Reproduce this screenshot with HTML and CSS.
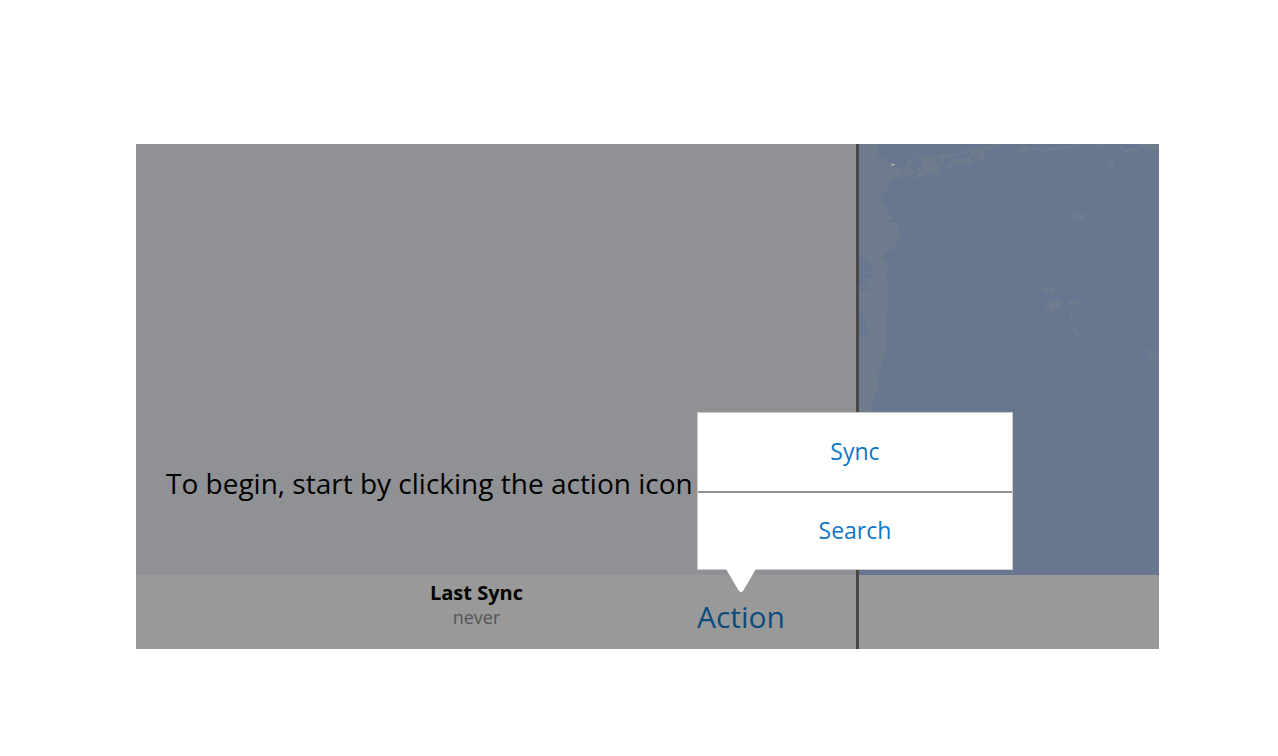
FILE: index.html
```html
<!DOCTYPE html>
<html lang="en">
<head>
<meta charset="utf-8">
<title>Sync</title>
<link rel="stylesheet" href="styles.css">
</head>
<body>
<main class="app">
  <section class="panel">
    <div class="panel-body">
      <p class="hint">To begin, start by clicking the action icon</p>
    </div>
    <footer class="toolbar">
      <div class="status">
        <strong class="status-title">Last Sync</strong>
        <span class="status-value">never</span>
      </div>
      <div class="action">
        <button class="action-button" type="button" aria-haspopup="menu" aria-expanded="true">Action</button>
        <div class="popover" role="menu">
          <button class="popover-item" type="button" role="menuitem">Sync</button>
          <button class="popover-item" type="button" role="menuitem">Search</button>
          <svg class="popover-arrow" viewBox="0 0 30 24" aria-hidden="true"><path d="M0 0H30L17 22Q15 24 13 22Z" fill="#fff"/></svg>
        </div>
      </div>
    </footer>
  </section>
  <section class="map-pane">
    <svg class="map" viewBox="0 0 300 430" preserveAspectRatio="xMinYMin slice" aria-hidden="true">
      <rect width="300" height="430" fill="#68768f"/>
      <g fill="#6e7c8d">
        <path d="M0 0H17L19 4L18 8L21 13L26 15L28 18L33 19L35 22L42 24L48 21L49 17L54 13L61 11L76 12L82 10L91 9L100 9L108 5L121 4L127 1L146 0L145 2L136 3L132 6L127 5L125 9L127 14L122 16L118 14L114 20L109 22L105 19L96 21L92 24L87 26L84 23L77 22L83 27L79 31L70 29L64 33L58 35L55 33L60 28L56 27L52 32L45 31L41 34L35 34L30 38L28 43L32 48L29 50L27 45L23 49L21 54L24 60L27 63L31 70L34 75L27 77L38 78L39 86L42 90L38 96L36 103L40 107L46 108L46 110L37 107L33 104L28 107L23 114L29 120L29 127L27 132L31 139L28 144L30 151L29 162L27 170L27 181L28 193L27 205L23 217L20 228L18 239L20 242L17 248L15 256L12 266L0 270Z"/>
        <path d="M157 7L163 1L171 4L178 3L185 6L193 3L209 2L223 0L219 3L200 5L187 8L176 6L165 8L159 10Z"/>
        <path d="M232 5L238 1L245 0L241 3L233 7ZM253 1L263 3L268 5L278 3L281 0H300V6L290 6L281 4L278 6L269 8L269 11L265 9L262 5Z"/>
        <path d="M201 15L207 11L210 13L205 15L203 17ZM250 20L253 17L255 25L252 28L249 24ZM201 36L204 39L201 43L200 41Z"/>
        <path d="M216 68L219 70L222 67L221 72L225 69L228 67L223 76L217 73L214 78Z"/>
        <path d="M181 145L187 143L191 145L194 142L196 149L193 152L190 147L186 149ZM186 160L191 156L203 156L202 161L195 164L193 168L186 163ZM206 160L212 156H224L220 161ZM210 165L214 167L213 175L210 180L207 179L212 174ZM212 182L216 182L218 187L220 191L215 189Z"/>
        <path d="M148 220L152 222L159 230L155 228ZM287 206L292 205L295 216L291 214ZM295 207L300 213V216L296 213ZM297 218L300 220V225Z"/>
      </g>
      <g fill="#68768f">
        <path d="M0 111L5 114L15 123L10 127L15 134L4 135L11 139L0 141ZM0 143L12 144L9 146L2 147ZM0 164L4 169L6 176L10 189L0 193Z"/>
        <path d="M51 18L56 14L63 13V26L60 24L55 26L50 24L54 20ZM75 15L82 14L79 18L84 21L78 20ZM86 14L105 10L113 8L107 15L98 14L90 19L87 25L84 20ZM112 13L116 9L120 10L116 14L112 18ZM40 27L47 26L44 29Z"/>
      </g>
      <path d="M32 20H36V21H34V22H33Z" fill="#c8b6aa"/>
    </svg>
    <div class="map-footer"></div>
  </section>
</main>
</body>
</html>
```
FILE: styles.css
```css
* {
  box-sizing: border-box;
}

body {
  margin: 0;
  min-height: 100vh;
  padding: 144px 119px 107px 136px;
  display: flex;
  background: #fff;
  color: #000;
  font-family: "Segoe UI", "Open Sans", "Noto Sans", sans-serif;
}

button {
  margin: 0;
  padding: 0;
  border: 0;
  background: none;
  font: inherit;
  cursor: pointer;
}

.app {
  flex: 1;
  display: grid;
  grid-template-columns: 720fr 303fr;
}

.panel,
.map-pane {
  display: grid;
  grid-template-rows: 1fr 74px;
  min-width: 0;
}

.panel-body {
  display: flex;
  align-items: flex-end;
  padding: 0 28px 72px 30px;
  background: #909195;
}

.hint {
  margin: 0;
  font-size: 28px;
  line-height: 40px;
  white-space: nowrap;
}

.toolbar {
  display: grid;
  grid-template-columns: 1fr auto;
  padding: 6px 71px 12px 120px;
  background: #999;
}

.status {
  display: flex;
  flex-direction: column;
  align-items: center;
}

.status-title {
  font-size: 20px;
  line-height: 24px;
}

.status-value {
  color: #555;
  font-size: 18px;
  line-height: 24px;
}

.action {
  position: relative;
  align-self: end;
}

.action-button {
  display: block;
  color: #0b4c7e;
  font-size: 30px;
  line-height: 40px;
}

.popover {
  position: absolute;
  bottom: 67px;
  left: 0;
  z-index: 1;
  width: 316px;
  border: 1px solid #ccc;
  background: #fff;
}

.popover-item {
  display: block;
  width: 100%;
  padding-bottom: 2px;
  color: #0f76c6;
  font-size: 23px;
  line-height: 76px;
}

.popover-item + .popover-item {
  border-top: 2px solid #929292;
  line-height: 74px;
}

.popover-arrow {
  position: absolute;
  top: 100%;
  left: 28px;
  width: 30px;
  height: 24px;
}

.map-pane {
  border-left: 3px solid #484848;
}

.map {
  width: 100%;
  height: 100%;
  min-height: 0;
}

.map-footer {
  background: #999;
}
```
